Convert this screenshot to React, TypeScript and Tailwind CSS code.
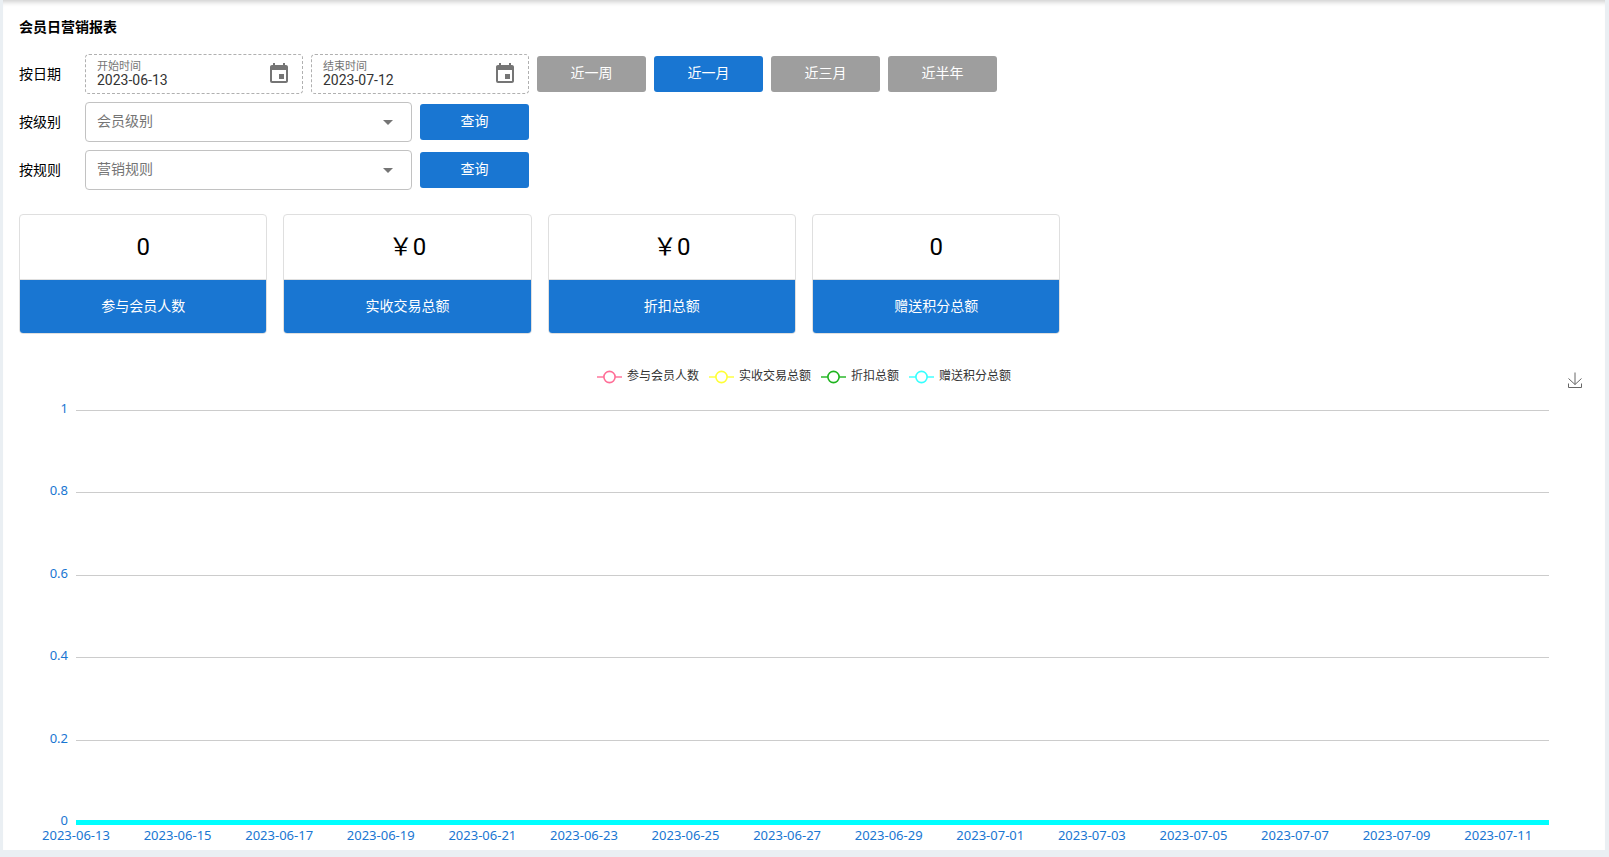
import React, {useState} from "react";
import {MdArrowDropDown, MdEvent} from "react-icons/md";

const BLUE = "#1976d2";

const ranges = ["近一周", "近一月", "近三月", "近半年"];

const stats = [
  {label: "参与会员人数", value: "0"},
  {label: "实收交易总额", value: "￥0"},
  {label: "折扣总额", value: "￥0"},
  {label: "赠送积分总额", value: "0"},
];

const series = [
  {name: "参与会员人数", color: "#ff6e97"},
  {name: "实收交易总额", color: "#ffff37"},
  {name: "折扣总额", color: "#1fb41f"},
  {name: "赠送积分总额", color: "#37ffff"},
];

const yTicks = ["1", "0.8", "0.6", "0.4", "0.2", "0"];

const xTicks = [
  "2023-06-13",
  "2023-06-15",
  "2023-06-17",
  "2023-06-19",
  "2023-06-21",
  "2023-06-23",
  "2023-06-25",
  "2023-06-27",
  "2023-06-29",
  "2023-07-01",
  "2023-07-03",
  "2023-07-05",
  "2023-07-07",
  "2023-07-09",
  "2023-07-11",
];

// 30 days on the axis, every second one is labelled
const INTERVALS = 29;

function DateField({id, label, initial}: {id: string; label: string; initial: string}) {
  const [value, setValue] = useState(initial);

  return (
    <div className="flex h-10 w-[218px] items-center rounded border border-dashed border-[#b0b0b0] px-[11px]">
      <div className="flex min-w-0 flex-1 flex-col pb-0.5">
        <label htmlFor={id} className="text-[11px] leading-[14px] text-[#757575]">
          {label}
        </label>
        <input
          id={id}
          type="text"
          value={value}
          onChange={(e) => setValue(e.target.value)}
          className="h-3 w-full bg-transparent text-sm leading-3 text-[#333] outline-none"
        />
      </div>
      <button type="button" aria-label={label} className="cursor-pointer text-[#757575]">
        <MdEvent size={24} />
      </button>
    </div>
  );
}

function SelectRow({id, label, placeholder}: {id: string; label: string; placeholder: string}) {
  return (
    <div className="flex items-center">
      <label htmlFor={id} className="w-[66px] text-sm">
        {label}
      </label>
      <div className="relative mr-2 w-[327px]">
        <select
          id={id}
          defaultValue=""
          className="h-10 w-full appearance-none rounded border border-[#c2c2c2] bg-white pr-9 pb-0.5 pl-[11px] text-sm text-[#757575] outline-none"
        >
          <option value="">{placeholder}</option>
        </select>
        <MdArrowDropDown
          size={24}
          className="pointer-events-none absolute top-2 right-3 text-[#757575]"
        />
      </div>
      <button
        type="button"
        className="h-9 w-[109px] cursor-pointer rounded-[3px] bg-[#1976d2] pb-0.5 text-sm text-white"
      >
        查询
      </button>
    </div>
  );
}

function Chart() {
  return (
    <section className="pt-8">
      <div className="grid h-11 grid-cols-[1fr_auto_1fr] items-start">
        <div className="col-start-2 flex h-5 items-center gap-2.5">
          {series.map((s) => (
            <div key={s.name} className="flex items-center gap-[5px]">
              <svg width="25" height="14" viewBox="0 0 25 14" className="mt-0.5">
                <path d="M0 7h25" stroke={s.color} strokeWidth="2" opacity="0.7" />
                <circle cx="12.5" cy="7" r="5.6" fill="#fff" stroke={s.color} strokeWidth="1.6" />
              </svg>
              <span className="text-xs text-[#333]">{s.name}</span>
            </div>
          ))}
        </div>
        <button
          type="button"
          aria-label="下载"
          className="mt-1.5 mr-1.5 cursor-pointer justify-self-end text-[#666]"
        >
          <svg width="16" height="16" viewBox="0 0 16 16" fill="none" stroke="currentColor">
            <path d="M8 0.5v12M1.5 6.5L8 12.5l6.5-6M1.5 11.5v4h13v-4" />
          </svg>
        </button>
      </div>
      <div className="pr-10 pl-[57px]">
        <svg
          className="block h-[438px] w-full overflow-visible font-['Noto_Sans','Noto_Sans_CJK_SC',sans-serif] text-[13px]"
          fill={BLUE}
        >
          {yTicks.map((tick, i) => {
            const y = Math.round(i * 82.4);
            return (
              <g key={tick}>
                <line x1="0" x2="100%" y1={y + 0.5} y2={y + 0.5} stroke="#ccc" />
                <text x="-8" y={y + 3} textAnchor="end">
                  {tick}
                </text>
              </g>
            );
          })}
          {/* all series are flat at zero, the last one covers the others */}
          <line x1="0" x2="100%" y1="412.5" y2="412.5" stroke="#0ff" strokeWidth="5" />
          {xTicks.map((tick, i) => (
            <text key={tick} x={`${((i * 2) / INTERVALS) * 100}%`} y="430" textAnchor="middle">
              {tick}
            </text>
          ))}
        </svg>
      </div>
    </section>
  );
}

export default function App() {
  const [range, setRange] = useState("近一月");

  return (
    <div className="min-h-screen bg-[#eaeff3] pr-1 pb-[7px] pl-[3px] font-[Roboto,'Noto_Sans_CJK_SC',sans-serif] text-black">
      <main className="bg-white px-4 pt-4 pb-0.5 shadow-[inset_0_6px_5px_-4px_rgba(0,0,0,0.2)]">
        <h1 className="text-sm leading-[22px] font-bold">会员日营销报表</h1>

        <div className="mt-4 flex flex-col gap-2">
          <div className="flex items-center">
            <span className="w-[66px] text-sm">按日期</span>
            <div className="flex items-center gap-2">
              <DateField id="start" label="开始时间" initial="2023-06-13" />
              <DateField id="end" label="结束时间" initial="2023-07-12" />
              {ranges.map((r) => (
                <button
                  key={r}
                  type="button"
                  onClick={() => setRange(r)}
                  className={`h-9 w-[109px] cursor-pointer rounded-[3px] pb-0.5 text-sm text-white ${
                    r === range ? "bg-[#1976d2]" : "bg-[#9e9e9e]"
                  }`}
                >
                  {r}
                </button>
              ))}
            </div>
          </div>
          <SelectRow id="level" label="按级别" placeholder="会员级别" />
          <SelectRow id="rule" label="按规则" placeholder="营销规则" />
        </div>

        <div className="mt-6 grid grid-cols-6 gap-4">
          {stats.map((s) => (
            <div key={s.label} className="overflow-hidden rounded border border-[#dfdfdf]">
              <div className="flex h-[65px] items-center justify-center border-b border-[#dfdfdf] text-2xl">
                {s.value}
              </div>
              <div className="flex h-[53px] items-center justify-center bg-[#1976d2] pb-0.5 text-sm text-white">
                {s.label}
              </div>
            </div>
          ))}
        </div>

        <Chart />
      </main>
    </div>
  );
}
